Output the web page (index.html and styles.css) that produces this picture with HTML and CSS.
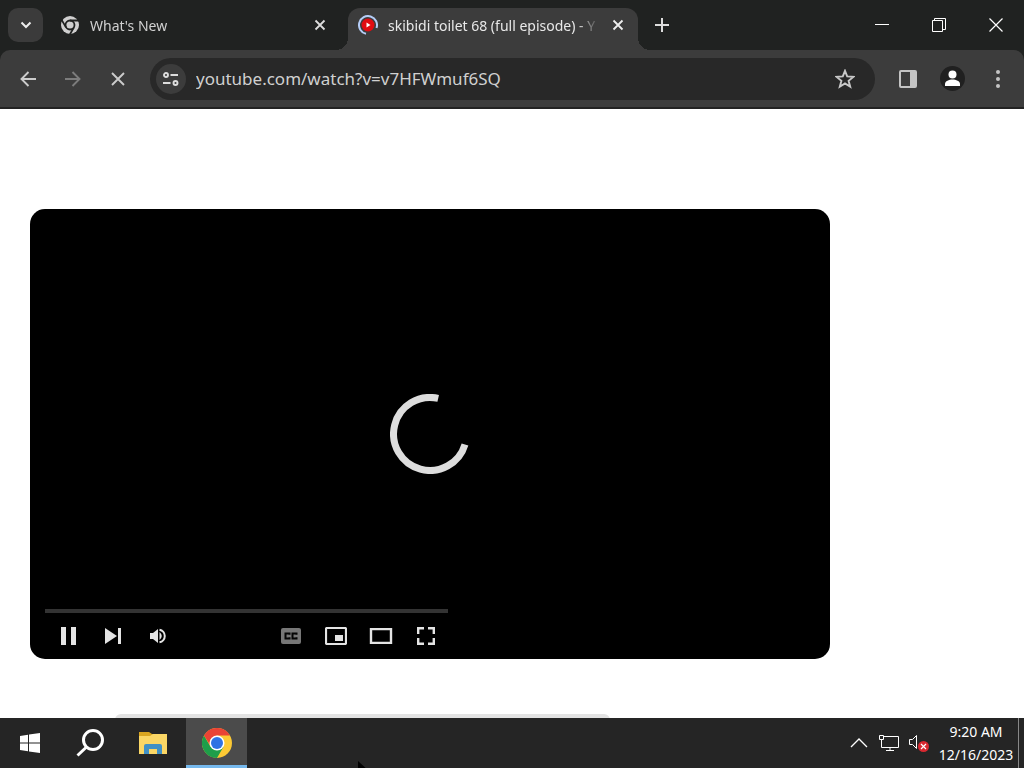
FILE: index.html
```html
<!DOCTYPE html>
<html lang="en">
<head>
<meta charset="utf-8">
<title>skibidi toilet 68 (full episode) - YouTube</title>
<link rel="stylesheet" href="styles.css">
</head>
<body>
<header class="browser">
  <div class="tabstrip">
    <button class="tab-search" aria-label="Search tabs"><svg width="12" height="8" viewBox="0 0 12 8"><path d="M1.500 1.500 6 6l4.500-4.500" fill="none" stroke="#eee" stroke-width="2"/></svg></button>
    <div class="tab">
      <svg class="favicon" width="20" height="20" viewBox="0 0 20 20"><circle cx="10" cy="10" r="9" fill="#d0d0d0"/><g fill="none" stroke="#202221" stroke-width="1.800"><circle cx="10" cy="10" r="4.500"/><path d="M10 5.500h9M14 12.400 9.500 20M6 12.400 1.500 4.600"/></g></svg>
      <span class="tab-title">What's New</span>
      <button class="tab-close" aria-label="Close What's New"><svg width="12" height="12" viewBox="0 0 12 12"><path d="m1.500 1.500 9 9m0-9-9 9" stroke="#ddd" stroke-width="1.800"/></svg></button>
    </div>
    <div class="tab tab-active">
      <svg class="favicon" width="20" height="20" viewBox="0 0 20 20"><circle cx="10" cy="10" r="6.500" fill="#e00c12"/><path d="m8.500 7.500 4 2.500-4 2.500z" fill="#fff"/><path d="M8 18.800A9 9 0 1 1 18.500 13" fill="none" stroke="#b5cdf7" stroke-width="2"/></svg>
      <span class="tab-title">skibidi toilet 68 (full episode) - Y</span>
      <button class="tab-close" aria-label="Close video tab"><svg width="12" height="12" viewBox="0 0 12 12"><path d="m1.500 1.500 9 9m0-9-9 9" stroke="#eee" stroke-width="1.800"/></svg></button>
    </div>
    <button class="new-tab" aria-label="New tab"><svg width="14" height="14" viewBox="0 0 14 14"><path d="M7 0v14M0 7h14" stroke="#ddd" stroke-width="2"/></svg></button>
    <div class="window-controls">
      <button aria-label="Minimize"><svg width="14" height="14" viewBox="0 0 14 14"><path d="M0 6.500h14" stroke="#fff"/></svg></button>
      <button aria-label="Restore"><svg width="14" height="14" viewBox="0 0 14 14"><path d="M.5 2.500h10v11H.5zM2.500 2.500v-2h11v11h-3" fill="none" stroke="#fff"/></svg></button>
      <button aria-label="Close"><svg width="14" height="14" viewBox="0 0 14 14"><path d="m.5.5 13 13m0-13-13 13" stroke="#fff" stroke-width="1.200"/></svg></button>
    </div>
  </div>
  <div class="toolbar">
    <button class="tool" aria-label="Back"><svg width="16" height="16" viewBox="0 0 16 16"><path d="M16 8H2m6.500-7L1.500 8l7 7" fill="none" stroke="#ccc" stroke-width="1.900"/></svg></button>
    <button class="tool" aria-label="Forward"><svg width="16" height="16" viewBox="0 0 16 16"><path d="M0 8h14M7.500 1l7 7-7 7" fill="none" stroke="#7c7c7c" stroke-width="1.900"/></svg></button>
    <button class="tool" aria-label="Stop loading"><svg width="14" height="14" viewBox="0 0 14 14"><path d="m1 1 12 12m0-12L1 13" stroke="#ccc" stroke-width="1.900"/></svg></button>
    <div class="omnibox">
      <button class="site-info" aria-label="Site information"><svg width="16" height="14" viewBox="0 0 16 14"><g fill="none" stroke="#ddd" stroke-width="1.900"><circle cx="3" cy="3" r="2"/><path d="M7.500 3H15M0 11h7.500"/><circle cx="12.500" cy="11" r="2"/></g></svg></button>
      <input class="url" type="text" aria-label="Address" value="youtube.com/watch?v=v7HFWmuf6SQ">
      <button class="bookmark" aria-label="Bookmark this tab"><svg width="20" height="20" viewBox="0 0 20 20"><path d="m10 1.800 2.200 5.600 6.200.5-4.800 3.900 1.600 5.900-5.200-3.300-5.200 3.300 1.600-5.900L1.600 7.900l6.200-.5z" fill="none" stroke="#c8c8c8" stroke-width="1.900"/></svg></button>
    </div>
    <button class="tool" aria-label="Side panel"><svg width="18" height="18" viewBox="0 0 18 18"><rect x="1" y="1" width="16" height="16" rx="1" fill="none" stroke="#c4c4c4" stroke-width="2"/><path d="M11 1h6v16h-6z" fill="#c4c4c4"/></svg></button>
    <button class="tool" aria-label="Profile"><svg width="25" height="25" viewBox="0 0 25 25"><circle cx="12.500" cy="12.500" r="12.500" fill="#202020"/><circle cx="12.500" cy="8.500" r="4" fill="#fff"/><path d="M5 20v-2c0-3 4-4.500 7.500-4.500S20 15 20 18v2z" fill="#fff"/></svg></button>
    <button class="tool" aria-label="Menu"><svg width="4" height="18" viewBox="0 0 4 18"><g fill="#c4c4c4"><circle cx="2" cy="2" r="2"/><circle cx="2" cy="9" r="2"/><circle cx="2" cy="16" r="2"/></g></svg></button>
  </div>
</header>
<main class="page">
  <section class="player" aria-label="Video player">
    <div class="stage">
      <svg class="spinner" width="80" height="80" viewBox="0 0 80 80"><path d="M48.200 4.400A36.500 36.500 0 1 0 75 50.500" fill="none" stroke="#ddd" stroke-width="7"/></svg>
    </div>
    <div class="chrome-bottom">
      <div class="progress"></div>
      <div class="controls">
        <button aria-label="Pause"><svg width="16" height="20" viewBox="0 0 16 20"><path d="M1 1h5v18H1zM11 1h5v18h-5z" fill="#e4e4e4"/></svg></button>
        <button aria-label="Next"><svg width="16" height="16" viewBox="0 0 16 16"><path d="m0 0 12 8-12 8zM13 0h3v16h-3z" fill="#e4e4e4"/></svg></button>
        <button aria-label="Mute"><svg width="16" height="16" viewBox="0 0 16 16"><path d="M0 5h3l5-4v14l-5-4H0z" fill="#e4e4e4"/><path d="M9.500 4q4.500 4 0 8z" fill="#e4e4e4"/><path d="M9.500 1.700a6.400 6.400 0 0 1 0 12.600" fill="none" stroke="#e4e4e4" stroke-width="2"/></svg></button>
        <button class="push" aria-label="Subtitles"><svg width="20" height="16" viewBox="0 0 20 16"><rect width="20" height="16" rx="2" fill="#777"/><path d="M8.500 6.700V5.500H4.500v5h4V9.300M15.500 6.700V5.500h-4v5h4V9.300" fill="none" stroke="#050505" stroke-width="2"/></svg></button>
        <button aria-label="Miniplayer"><svg width="22" height="18" viewBox="0 0 22 18"><rect x="1" y="1" width="20" height="16" rx="1" fill="none" stroke="#e4e4e4" stroke-width="2.200"/><path d="M10 8h8v6h-8z" fill="#e4e4e4"/></svg></button>
        <button aria-label="Theater mode"><svg width="24" height="16" viewBox="0 0 24 16"><path d="M2 1h20v14H2z" fill="none" stroke="#e4e4e4" stroke-width="2.400"/></svg></button>
        <button aria-label="Full screen"><svg width="18" height="18" viewBox="0 0 18 18"><path d="M1.200 7V1.200H7M11 1.200h5.800V7M16.800 11v5.800H11M7 16.800H1.200V11" fill="none" stroke="#e4e4e4" stroke-width="2.400"/></svg></button>
      </div>
    </div>
  </section>
  <div class="skeleton"></div>
</main>
<footer class="taskbar">
  <button class="task" aria-label="Start"><svg width="20" height="20" viewBox="0 0 20 20"><path d="m0 3 8-1.200V9.500H0zM9 1.600 20 0v9.500H9zM0 10.500h8v7.700L0 17zM9 10.500h11V20L9 18.400z" fill="#fff"/></svg></button>
  <button class="task" aria-label="Search"><svg width="30" height="28" viewBox="0 0 30 28"><circle cx="18" cy="11" r="9.500" fill="none" stroke="#fff" stroke-width="3"/><path d="m11.500 18-9 8.500" stroke="#fff" stroke-width="3"/></svg></button>
  <button class="task" aria-label="File Explorer"><svg width="28" height="24" viewBox="0 0 28 24"><path d="M0 1h10l3 2h15v20H0z" fill="#d9a520"/><path d="M1 5h10l3-2h14v20H0V5z" fill="#fad665"/><path d="M5 23V15q0-2 2-2h14q2 0 2 2v8h-5v-5h-8v5z" fill="#4090c5"/></svg></button>
  <button class="task task-active" aria-label="Google Chrome"><svg width="30" height="30" viewBox="0 0 30 30"><circle cx="15" cy="15" r="15" fill="#fcc934"/><path d="M2 7.500 8.500 18.800 15 15l6.500 3.800L15 30A15 15 0 0 1 2 7.500z" fill="#1e9e4a"/><path d="M2 7.500A15 15 0 0 1 28 7.500H15L8.500 11.200 8 17z" fill="#ea4335"/><circle cx="15" cy="15" r="7.500" fill="#fff"/><circle cx="15" cy="15" r="6" fill="#2f72e4"/></svg></button>
  <div class="tray">
    <button class="tray-button" aria-label="Show hidden icons"><svg width="18" height="10" viewBox="0 0 18 10"><path d="m1 9 8-8 8 8" fill="none" stroke="#fff" stroke-width="1.300"/></svg></button>
    <button class="tray-button" aria-label="Network"><svg width="20" height="18" viewBox="0 0 20 18"><path d="M5 2.500h14.500v11h-17V7M11 13.500v3M7 16.500h8M.5 1.500h4v4h-4zM2.500 5.500v3" fill="none" stroke="#fff"/></svg></button>
    <button class="tray-button" aria-label="Sound muted"><svg width="20" height="18" viewBox="0 0 20 18"><path d="M.5 5.500h3l4-4v13l-4-4h-3z" fill="none" stroke="#fff"/><circle cx="14.500" cy="12.500" r="5.500" fill="#d82830"/><path d="m12 10 5 5m0-5-5 5" stroke="#fff" stroke-width="1.200"/></svg></button>
    <button class="clock"><span>9:20 AM</span><span>12/16/2023</span></button>
    <button class="show-desktop" aria-label="Show desktop"></button>
  </div>
  <svg class="pointer" width="12" height="19" viewBox="0 0 12 19"><path d="M0 0v16l4-4 2 6h3l-3-7h6z" fill="#000"/></svg>
</footer>
</body>
</html>
```
FILE: styles.css
```css
* { box-sizing: border-box; }
body {
  margin: 0;
  height: 100vh;
  display: flex;
  flex-direction: column;
  overflow: hidden;
  background: #fff;
  font-family: "Noto Sans", "Open Sans", sans-serif;
}
button {
  display: flex;
  align-items: center;
  justify-content: center;
  flex: none;
  padding: 0;
  border: 0;
  background: none;
  color: inherit;
  font: inherit;
}
svg { display: block; flex: none; }

.browser { flex: none; background: #202221; color: #e3e3e3; }
.tabstrip { display: flex; height: 50px; padding: 8px 0 0 8px; }
.tab-search { width: 35px; height: 34px; border-radius: 10px; background: #3b3b3b; }
.tab {
  display: flex;
  align-items: center;
  gap: 10px;
  flex: 0 1 290px;
  min-width: 0;
  height: 42px;
  margin-left: 7px;
  padding: 0 12px 8px 10px;
  color: #d0d0d0;
  font-size: 14px;
}
.tab-title {
  flex: 1;
  min-width: 0;
  overflow: hidden;
  white-space: nowrap;
  mask-image: linear-gradient(90deg, #000 calc(100% - 24px), transparent);
}
.tab-close { width: 16px; height: 16px; }
.tab-active {
  position: relative;
  border-radius: 12px 12px 0 0;
  background: #3c3c3c;
  color: #e8e8e8;
  margin-left: 8px;
}
.tab-active::before,
.tab-active::after {
  content: "";
  position: absolute;
  bottom: 0;
  width: 12px;
  height: 12px;
}
.tab-active::before { right: 100%; background: radial-gradient(circle at 0 0, transparent 12px, #3c3c3c 12px); }
.tab-active::after { left: 100%; background: radial-gradient(circle at 100% 0, transparent 12px, #3c3c3c 12px); }
.new-tab { width: 34px; height: 34px; margin-left: 7px; }
.window-controls { display: flex; height: 34px; margin-left: auto; }
.window-controls button { width: 57px; }

.toolbar {
  display: flex;
  align-items: center;
  height: 59px;
  padding: 0 4px 0 5px;
  border-bottom: 2px solid #222;
  border-radius: 10px 10px 0 0;
  background: #3c3c3c;
}
.tool { width: 45px; height: 42px; }
.omnibox {
  display: flex;
  align-items: center;
  flex: 1;
  min-width: 0;
  height: 42px;
  margin: 0 10px;
  padding: 0 14px 0 6px;
  border-radius: 21px;
  background: #282828;
}
.site-info { width: 30px; height: 30px; border-radius: 50%; background: #3c3c3c; }
.url {
  flex: 1;
  min-width: 0;
  padding: 0 0 0 10px;
  border: 0;
  outline: 0;
  background: none;
  color: #d0d0d0;
  font: 17px/24px "Noto Sans", "Open Sans", sans-serif;
}
.bookmark { width: 32px; height: 32px; }

.page { flex: 1; min-height: 0; overflow: hidden; padding: 100px 30px 0; }
.player {
  display: flex;
  flex-direction: column;
  max-width: 800px;
  aspect-ratio: 16 / 9;
  border-radius: 15px;
  background: #000;
}
.stage { position: relative; flex: 1; }
.spinner { position: absolute; left: 360px; top: 185px; }
.chrome-bottom { width: 403px; margin-left: 15px; }
.progress { height: 4px; background: #333; }
.controls { display: flex; height: 46px; }
.controls button { width: 45px; }
.controls .push { margin-left: auto; }
.skeleton { width: 495px; height: 45px; margin: 55px 0 0 85px; border-radius: 6px; background: #e3e3e3; }

.taskbar { position: relative; display: flex; flex: none; height: 50px; background: #252525; color: #fff; }
.task { width: 60px; }
.task:nth-child(3) { width: 66px; }
.task-active { width: 61px; background: #4b4b4b; border-bottom: 3px solid #76b9ed; border-top: 3px solid #4b4b4b; }
.tray { display: flex; align-items: center; margin-left: auto; }
.tray-button { width: 30px; height: 50px; }
.clock {
  flex-direction: column;
  width: 84px;
  height: 50px;
  font-size: 14px;
  line-height: 23px;
}
.show-desktop { width: 6px; height: 50px; border-left: 1px solid #888; }
.pointer { position: absolute; left: 358px; top: 43px; }
```
